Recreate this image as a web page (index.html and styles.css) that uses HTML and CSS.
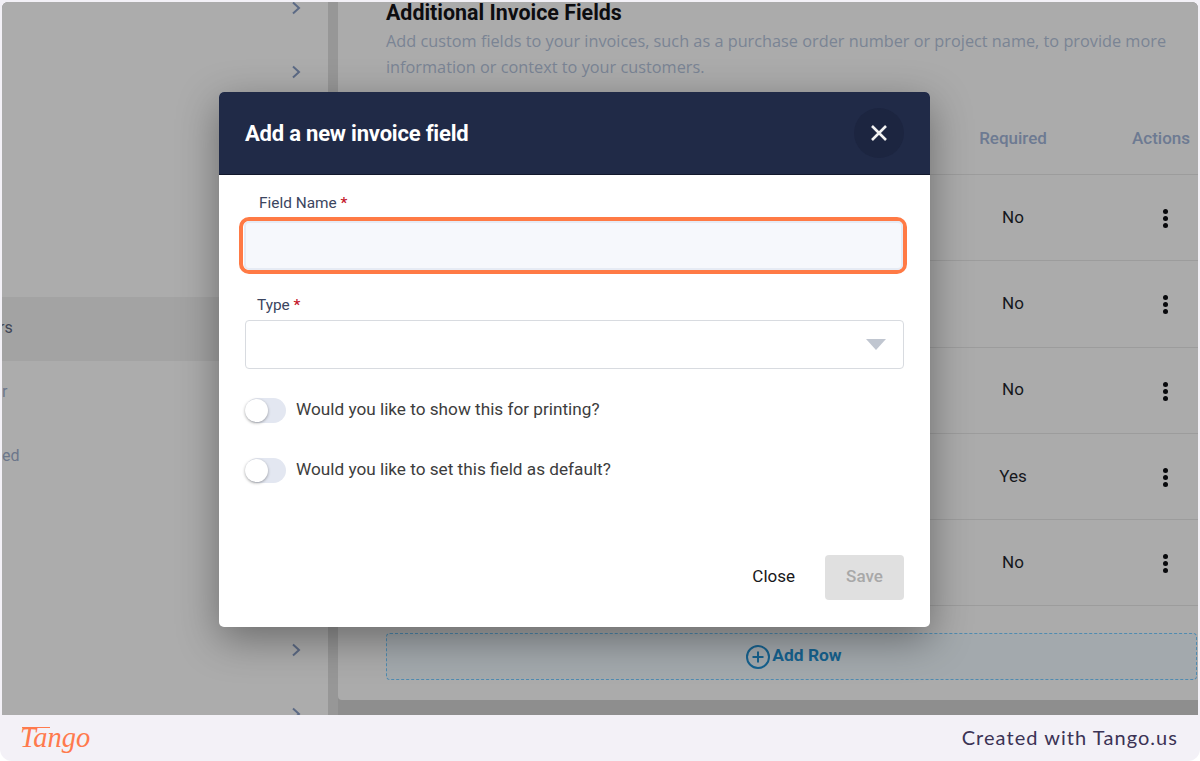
FILE: index.html
```html
<!DOCTYPE html>
<html lang="en">
<head>
<meta charset="utf-8">
<title>Add a new invoice field</title>
<link rel="stylesheet" href="styles.css">
</head>
<body>
<div class="page">
  <div class="screen">
    <aside class="sidebar">
      <div class="side-row"><svg class="chev" viewBox="0 0 10 14"><path d="M2 1.5 8 7l-6 5.5"/></svg></div>
      <div class="side-row"><svg class="chev" viewBox="0 0 10 14"><path d="M2 1.5 8 7l-6 5.5"/></svg></div>
      <div class="side-row"></div>
      <div class="side-row"></div>
      <div class="side-row"></div>
      <div class="side-row active"><span class="side-label dark shift">rs</span></div>
      <div class="side-row"><span class="side-label">r</span></div>
      <div class="side-row"><span class="side-label">ed</span></div>
      <div class="side-row"></div>
      <div class="side-row"></div>
      <div class="side-row"><svg class="chev" viewBox="0 0 10 14"><path d="M2 1.5 8 7l-6 5.5"/></svg></div>
      <div class="side-row"><svg class="chev" viewBox="0 0 10 14"><path d="M2 1.5 8 7l-6 5.5"/></svg></div>
    </aside>
    <div class="gutter"></div>
    <main class="panel">
      <h2 class="panel-title">Additional Invoice Fields</h2>
      <p class="panel-desc">Add custom fields to your invoices, such as a purchase order number or project name, to provide more information or context to your customers.</p>
      <div class="table">
        <div class="tr head"><div class="td"></div><div class="td req">Required</div><div class="td act">Actions</div></div>
        <div class="tr"><div class="td"></div><div class="td req">No</div><div class="td act"><span class="dots"><i></i><i></i><i></i></span></div></div>
        <div class="tr"><div class="td"></div><div class="td req">No</div><div class="td act"><span class="dots"><i></i><i></i><i></i></span></div></div>
        <div class="tr"><div class="td"></div><div class="td req">No</div><div class="td act"><span class="dots"><i></i><i></i><i></i></span></div></div>
        <div class="tr"><div class="td"></div><div class="td req">Yes</div><div class="td act"><span class="dots"><i></i><i></i><i></i></span></div></div>
        <div class="tr"><div class="td"></div><div class="td req">No</div><div class="td act"><span class="dots"><i></i><i></i><i></i></span></div></div>
      </div>
      <div class="add-row">
        <svg class="plus" viewBox="0 0 24 24"><circle cx="12" cy="12" r="11"/><path d="M12 6.5v11M6.5 12h11"/></svg>
        <span>Add Row</span>
      </div>
    </main>
    <section class="modal">
      <header class="modal-head">
        <h1 class="modal-title">Add a new invoice field</h1>
        <button class="close-x" type="button" aria-label="Close">
          <svg viewBox="0 0 18 18"><path d="M2 2l14 14M16 2 2 16"/></svg>
        </button>
      </header>
      <div class="modal-body">
        <div class="field first">
          <label class="field-label inset">Field Name <b>*</b></label>
          <div class="focus-ring"><div class="text-input"></div></div>
        </div>
        <div class="field second">
          <label class="field-label">Type <b>*</b></label>
          <div class="select"><span class="caret"></span></div>
        </div>
        <div class="switch-row"><span class="switch"><span class="knob"></span></span><span class="switch-text">Would you like to show this for printing?</span></div>
        <div class="switch-row"><span class="switch"><span class="knob"></span></span><span class="switch-text">Would you like to set this field as default?</span></div>
        <div class="actions">
          <span class="btn-close">Close</span>
          <span class="btn-save">Save</span>
        </div>
      </div>
    </section>
  </div>
  <footer class="footer">
    <span class="logo">Tango</span>
    <span class="credit">Created with Tango.us</span>
  </footer>
</div>
</body>
</html>
```

FILE: styles.css
```css
* { box-sizing: border-box; }
html, body { margin: 0; padding: 0; background: #fff; }
body { font-family: Roboto, "Liberation Sans", sans-serif; }
.page { width: 1200px; height: 761px; display: flex; flex-direction: column; overflow: hidden; background: #f3f1f7; border-radius: 0 0 12px 12px; }
.screen { position: relative; height: 713px; margin: 2px 2px 0 2px; display: flex; overflow: hidden; background: #8e8e8e; border-radius: 6px 6px 0 0; }

.sidebar { width: 326px; flex: none; margin-top: -26px; background: #acacac; }
.side-row { height: 64.2px; display: flex; align-items: center; justify-content: flex-end; padding-right: 27px; position: relative; }
.side-row.active { background: #a3a3a3; }
.side-label { margin-right: auto; margin-left: 0; padding-bottom: 4px; font-size: 16px; color: #6c778b; }
.side-label.dark { color: #3f4656; }
.side-label.shift { margin-left: -3px; }
.chev { width: 10px; height: 14px; fill: none; stroke: #5c6a85; stroke-width: 2; }

.gutter { width: 10px; flex: none; background: #979797; }
.panel { flex: 1; height: 698px; padding-left: 48px; background: #ababab; border-radius: 0 0 0 4px; min-width: 0; }
.panel-title { margin: 0; font-size: 21.4px; line-height: 22px; height: 26px; font-weight: 700; color: #0d0d10; }
.panel-desc { margin: 0; font-family: "Open Sans", sans-serif; font-size: 16.3px; line-height: 26px; color: #7a8494; width: 800px; }

.table { margin-top: 12px; }
.tr { display: grid; grid-template-columns: 1fr 66px 152px; height: 86.3px; align-items: center; border-bottom: 1px solid #9c9c9c; }
.tr.head { height: 83px; padding-top: 10px; }
.td { font-size: 17px; text-align: center; color: #15171c; }
.head .td { color: #6d7a92; font-weight: 500; }
.td.req { white-space: nowrap; display: flex; justify-content: center; padding-bottom: 2px; }
.head .td.req { padding-bottom: 0; }
.td.act { white-space: nowrap; padding-left: 78px; }
.dots { display: inline-flex; flex-direction: column; gap: 2px; margin-left: 9px; vertical-align: middle; }
.dots i { display: block; width: 5px; height: 5px; border-radius: 50%; background: #08090c; }

.add-row { margin-top: 27px; margin-right: 1px; height: 47px; display: flex; align-items: center; justify-content: center; gap: 2px; padding-left: 3px; border: 1px dashed #4f8bb0; border-radius: 4px; background: #a3a9ad; color: #16628f; font-weight: 700; font-size: 17.4px; }
.add-row span { padding-bottom: 3px; }
.plus { width: 24px; height: 24px; fill: none; stroke: #16628f; stroke-width: 2; margin-left: 2px; }

.modal { position: absolute; left: 217px; top: 90px; width: 711px; height: 535px; background: #fff; border-radius: 5px; box-shadow: 0 12px 40px rgba(0, 0, 0, .38); display: flex; flex-direction: column; overflow: hidden; }
.modal-head { height: 83px; flex: none; padding: 0 26px; display: flex; align-items: center; justify-content: space-between; background: #202a47; border-bottom: 1px solid #12182c; }
.modal-title { margin: 0; font-size: 22px; font-weight: 700; color: #fff; letter-spacing: -.2px; }
.close-x { width: 50px; height: 50px; padding: 0; border: 0; border-radius: 50%; background: #1c2540; display: flex; align-items: center; justify-content: center; }
.close-x svg { width: 18px; height: 18px; fill: none; stroke: #f2f2f2; stroke-width: 2.6; }

.modal-body { flex: 1; padding: 0 26px; display: flex; flex-direction: column; }
.field-label { display: block; font-size: 15.4px; line-height: 20px; color: #3b4560; }
.field-label b { color: #c4162a; font-weight: 500; }
.field-label.inset { padding-left: 14px; }
.field.first { padding-top: 18px; }
.focus-ring { margin: 4px -3px 0 -6px; height: 57px; padding: 0 0 0 1px; border: 4px solid #ff7a45; border-radius: 10px; }
.text-input { height: 49px; background: #f6f8fc; border: 2px solid #e6ebf4; border-radius: 5px; }
.field.second { padding-top: 21px; }
.field.second .field-label { padding-left: 12px; }
.select { position: relative; margin-top: 5px; height: 49px; border: 1px solid #d8dbe0; border-radius: 4px; }
.caret { position: absolute; right: 17px; top: 18px; width: 0; height: 0; border-left: 10px solid transparent; border-right: 10px solid transparent; border-top: 11px solid #c0c6d0; }

.switch-row { display: flex; align-items: center; gap: 10px; height: 25px; margin-top: 35px; font-size: 17.2px; color: #3d3d3d; }
.field.second + .switch-row { margin-top: 29px; }
.switch-text { padding-bottom: 3px; }
.switch { width: 41px; height: 25px; flex: none; background: #e3e7f1; border-radius: 13px; position: relative; }
.knob { position: absolute; left: 0; top: 1px; width: 23px; height: 23px; border-radius: 50%; background: #fff; box-shadow: 0 1px 3px rgba(0, 0, 0, .35); }

.actions { margin-top: auto; margin-bottom: 27px; display: flex; align-items: center; justify-content: flex-end; gap: 30px; font-size: 17px; }
.btn-close { color: #17171a; padding-bottom: 3px; }
.btn-save { width: 79px; height: 45px; padding-bottom: 3px; display: flex; align-items: center; justify-content: center; background: #e0e0e0; border-radius: 4px; color: #a8a8a8; font-weight: 500; }

.footer { height: 46px; flex: none; display: flex; align-items: center; justify-content: space-between; padding: 0 22px 0 20px; }
.logo { position: relative; font-family: "Liberation Serif", serif; font-style: italic; font-size: 28.5px; line-height: 1; color: #ff7a4d; }
.logo::before { content: ""; position: absolute; left: 2px; top: 3px; width: 28px; height: 1px; background: #ff7a4d; }
.credit { padding-bottom: 2px; font-family: Lato, sans-serif; font-size: 20px; letter-spacing: 1.05px; color: #3b3355; }
```
